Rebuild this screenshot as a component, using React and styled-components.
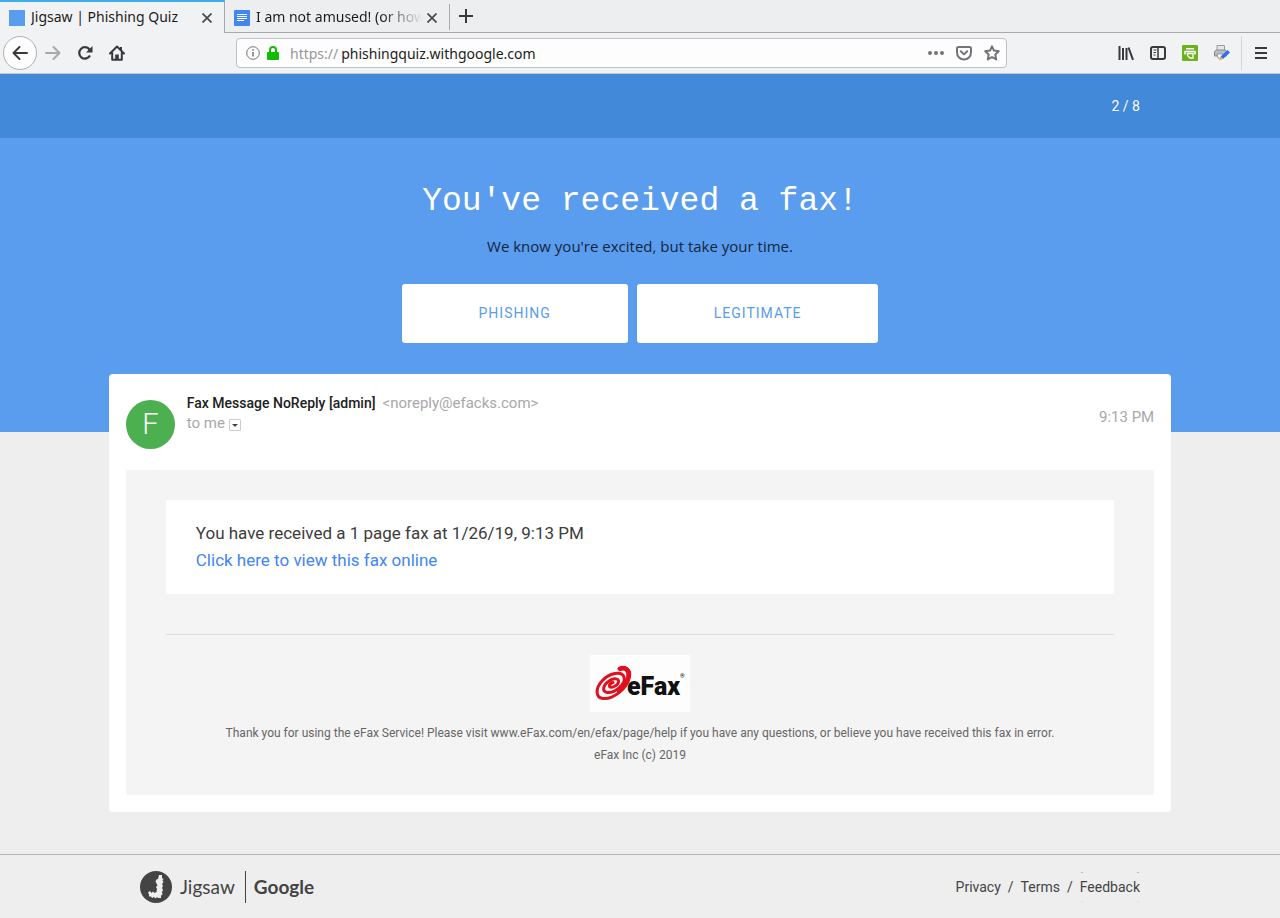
import React from 'react'
import styled, { createGlobalStyle } from 'styled-components'

const App = () => (
  <>
    <GlobalStyle />
    <Browser />
    <TopBar>
      <Container $end>
        <Counter>2 / 8</Counter>
      </Container>
    </TopBar>
    <Hero>
      <Title>You've received a fax!</Title>
      <Subtitle>We know you're excited, but take your time.</Subtitle>
      <Answers>
        <AnswerBtn type='button'>PHISHING</AnswerBtn>
        <AnswerBtn type='button'>LEGITIMATE</AnswerBtn>
      </Answers>
    </Hero>
    <Mail />
    <Footer />
  </>
)

const Browser = () => (
  <Chrome>
    <TabBar>
      <Tab $active>
        <TabButton type='button'>
          <Favicon />
          <TabLabel>Jigsaw | Phishing Quiz</TabLabel>
        </TabButton>
        <CloseButton />
      </Tab>
      <Tab>
        <TabButton type='button'>
          <DocsIcon />
          <TabLabel $fade>I am not amused! (or how</TabLabel>
        </TabButton>
        <CloseButton />
      </Tab>
      <NewTab type='button' aria-label='New tab'>
        <svg width='16' height='16' viewBox='0 0 16 16'>
          <path d='M8 1v14M1 8h14' stroke='#38383d' strokeWidth='2' />
        </svg>
      </NewTab>
    </TabBar>
    <NavBar>
      <NavGroup>
        <BackBtn type='button' aria-label='Back'>
          <Stroke d='M15 8H1.5M7.5 2L1.5 8l6 6' />
        </BackBtn>
        <ToolBtn type='button' aria-label='Forward'>
          <Stroke color='#a9a9ad' d='M1 8h13.500M8.500 2l6 6-6 6' />
        </ToolBtn>
        <ToolBtn type='button' aria-label='Reload'>
          <svg width='16' height='16' viewBox='0 0 16 16'>
            <path
              d='M13 10.500A5.700 5.700 0 1 1 12.500 4.500'
              fill='none'
              stroke='#38383d'
              strokeWidth='2.200'
            />
            <path d='M15.500 1v6.500H9z' fill='#38383d' />
          </svg>
        </ToolBtn>
        <ToolBtn type='button' aria-label='Home'>
          <svg width='16' height='16' viewBox='0 0 16 16'>
            <path
              d='M1 8.500L8 1.500l7 7M3.200 8v6.800h9.600V8'
              fill='none'
              stroke='#38383d'
              strokeWidth='2'
              strokeLinecap='round'
              strokeLinejoin='round'
            />
            <path d='M6.200 15V9.500h3.600V15z' fill='#38383d' />
            <path d='M11 2h2v4l-2-2z' fill='#38383d' />
          </svg>
        </ToolBtn>
      </NavGroup>
      <UrlBox>
        <svg width='14' height='14' viewBox='0 0 14 14'>
          <circle cx='7' cy='7' r='6.300' fill='none' stroke='#737378' />
          <path d='M7 6v4.500M7 3.200v1.600' stroke='#737378' strokeWidth='1.500' />
        </svg>
        <svg width='12' height='14' viewBox='0 0 12 14'>
          <path d='M3 7V4a3 3 0 0 1 6 0v3' fill='none' stroke='#12bc00' strokeWidth='2' />
          <rect y='6' width='12' height='8' rx='1' fill='#12bc00' />
        </svg>
        <UrlField>
          <label htmlFor='url'>https://</label>
          <input id='url' type='text' defaultValue='phishingquiz.withgoogle.com' />
        </UrlField>
        <UrlBtn type='button' aria-label='Page actions'>
          <svg width='16' height='16' viewBox='0 0 16 16' fill='#737378'>
            <circle cx='2' cy='8' r='2' />
            <circle cx='8' cy='8' r='2' />
            <circle cx='14' cy='8' r='2' />
          </svg>
        </UrlBtn>
        <UrlBtn type='button' aria-label='Save to Pocket'>
          <Stroke
            color='#737378'
            d='M2.500 2h11A1.500 1.500 0 0 1 15 3.500V7.500a7 7 0 0 1-14 0V3.500A1.500 1.500 0 0 1 2.500 2zM4.800 6.300L8 9.400l3.200-3.100'
          />
        </UrlBtn>
        <UrlBtn type='button' aria-label='Bookmark this page'>
          <Stroke
            color='#737378'
            d='M8 1.300l2 4.300 4.800.600-3.500 3.300.900 4.900L8 12l-4.200 2.400.900-4.900L1.200 6.200 6 5.600z'
          />
        </UrlBtn>
      </UrlBox>
      <NavGroup>
        <ToolBtn type='button' aria-label='Library'>
          <svg width='16' height='16' viewBox='0 0 16 16'>
            <path
              d='M1.500 1v14M5 3v12M8.500 3v12M10.500 2.500L15 14.800'
              fill='none'
              stroke='#38383d'
              strokeWidth='2'
            />
          </svg>
        </ToolBtn>
        <ToolBtn type='button' aria-label='Sidebars'>
          <svg width='16' height='16' viewBox='0 0 16 16' fill='none' stroke='#38383d'>
            <rect x='1' y='2' width='14' height='12' rx='2' strokeWidth='2' />
            <path d='M8 2v12' strokeWidth='1.500' />
            <path d='M3.500 5h3M3.500 7.500h2.500M3.500 10h2' />
          </svg>
        </ToolBtn>
        <ToolBtn type='button' aria-label='Print friendly'>
          <svg width='16' height='16' viewBox='0 0 16 16'>
            <rect width='16' height='16' rx='1' fill='#6db21d' />
            <path d='M4 3h8v1.500H4z' fill='#fff' />
            <path d='M3 9.500V6.500h10v3' fill='none' stroke='#fff' strokeWidth='1.500' />
            <path
              d='M5.500 8.500h5.500v4.500H8L5.500 10.500z'
              fill='#6db21d'
              stroke='#fff'
              strokeWidth='1.300'
            />
          </svg>
        </ToolBtn>
        <ToolBtn type='button' aria-label='Print edit'>
          <svg width='16' height='16' viewBox='0 0 16 16'>
            <path d='M3 .500h7.500V6H3z' fill='#e4e6e9' stroke='#9a9da2' />
            <path d='M.500 6.500l2-1.500h9l1 1.500V11H.500z' fill='#b9bcc1' stroke='#85888d' />
            <path d='M3 9h6v4H4z' fill='#fff' stroke='#999' />
            <path d='M13.500 5l2.500 2.500-7 6.500-2.500-2.500z' fill='#2f6ff0' />
            <path d='M6.500 11.500L9 14l-4 1.500z' fill='#e5ad3b' />
          </svg>
        </ToolBtn>
        <Divider />
        <ToolBtn type='button' aria-label='Open menu'>
          <svg width='16' height='16' viewBox='0 0 16 16'>
            <path d='M2 3h12M2 8h12M2 13h12' stroke='#38383d' strokeWidth='2' />
          </svg>
        </ToolBtn>
      </NavGroup>
    </NavBar>
  </Chrome>
)

const Stroke = ({ d, color = '#38383d' }) => (
  <svg
    width='16'
    height='16'
    viewBox='0 0 16 16'
    fill='none'
    stroke={color}
    strokeWidth='2'
    strokeLinecap='round'
    strokeLinejoin='round'
  >
    <path d={d} />
  </svg>
)

const CloseButton = () => (
  <CloseBtn type='button' aria-label='Close tab'>
    <svg width='10' height='10' viewBox='0 0 10 10'>
      <path d='M.500.500l9 9M9.500.500l-9 9' stroke='#48484d' strokeWidth='1.700' />
    </svg>
  </CloseBtn>
)

const DocsIcon = () => (
  <svg width='16' height='16' viewBox='0 0 16 16'>
    <rect width='16' height='16' rx='1' fill='#4285f4' />
    <path d='M3 4.500h10M3 6.500h10M3 8.500h10M3 10.500h7' stroke='#fff' />
  </svg>
)

const Mail = () => (
  <Card>
    <MailHeader>
      <Avatar>F</Avatar>
      <Sender>
        <From>
          <strong>Fax Message NoReply [admin]</strong>
          <span>&lt;noreply@efacks.com&gt;</span>
        </From>
        <Recipient>
          to me
          <Details type='button' aria-label='Show details'>
            <svg width='6' height='3' viewBox='0 0 6 3'>
              <path d='M0 0h6L3 3z' fill='#444' />
            </svg>
          </Details>
        </Recipient>
      </Sender>
      <Time>9:13 PM</Time>
    </MailHeader>
    <MailBody>
      <Message>
        <p>You have received a 1 page fax at 1/26/19, 9:13 PM</p>
        <a href='#fax'>Click here to view this fax online</a>
      </Message>
      <Signature>
        <EfaxLogo />
        <p>
          Thank you for using the eFax Service! Please visit
          www.eFax.com/en/efax/page/help if you have any questions, or believe
          you have received this fax in error.
        </p>
        <p>eFax Inc (c) 2019</p>
      </Signature>
    </MailBody>
  </Card>
)

const EfaxLogo = () => (
  <svg width='100' height='57' viewBox='0 0 100 57'>
    <rect width='100' height='57' fill='#fdfdfd' />
    <g fill='none' stroke='#e01020' strokeLinecap='round'>
      <path
        d='M29 13.500C35 10.500 41 14 39.500 22C37 34 23 44.500 13 43.500C5 42.500 5.500 33 12 26C19 18 32 15.500 34 22C36 29 25 38 17.500 37.500C11 36.500 13.500 29.500 19 26C24 22.500 29.500 23.500 28.500 27C27.500 31 21 33.500 19.500 31.500C18.500 30 21 28 23 27.500'
        strokeWidth='3'
      />
      <path d='M30 14C35 12 39.500 15 38.500 21.500C37 27 34 32 29 36' strokeWidth='4.500' />
    </g>
    <LogoText x='37' y='40' $size='25px'>
      eFax
    </LogoText>
    <LogoText x='90' y='23' $size='6px'>
      ®
    </LogoText>
  </svg>
)

const Footer = () => (
  <FooterBar>
    <Container>
      <Brands>
        <svg width='32' height='32' viewBox='0 0 32 32'>
          <circle cx='16' cy='16' r='16' fill='#444' />
          <path
            d='M19 4h3v3l1.500 1-1 1.500 1 1.500-1.500 2 1 2-1 2 1 2-1 2 .5 2.500-1.500 1v2.500h-3l-1-1-1.500 1.500-1.500-1.500-2 1-1-1.500h-2v-2l-1-2 2-1.500 1.500 2 1.500-1.500 1.500 1.500 2-1 .5-3-1-2 1.500-1.500-1-2-1-2 1-2 1.500-.5z'
            fill='#eee'
          />
        </svg>
        <Wordmark>Jigsaw</Wordmark>
        <BrandRule />
        <Wordmark $bold>Google</Wordmark>
      </Brands>
      <Links>
        <a href='#privacy'>Privacy</a>
        <span>/</span>
        <a href='#terms'>Terms</a>
        <span>/</span>
        <Feedback href='#feedback'>Feedback</Feedback>
      </Links>
    </Container>
  </FooterBar>
)

const GlobalStyle = createGlobalStyle`
  * {
    box-sizing: border-box;
  }
  body {
    margin: 0;
    background: #eee;
    font-family: Roboto, sans-serif;
  }
  p {
    margin: 0;
  }
  button {
    padding: 0;
    border: none;
    background: none;
    font: inherit;
    color: inherit;
    cursor: pointer;
  }
  a {
    color: inherit;
    text-decoration: none;
  }
  svg {
    display: block;
    flex-shrink: 0;
  }
`

const Chrome = styled.div`
  font-family: 'Noto Sans', sans-serif;
  font-size: 14px;
  color: #1c1c20;
  background: #f1f2f4;
`

const TabBar = styled.div`
  display: flex;
  height: 33px;
  background: linear-gradient(#a9a9ab, #a9a9ab) bottom / 100% 1px no-repeat #edeef0;
`

const Tab = styled.div`
  display: flex;
  align-items: center;
  width: 225px;
  padding: 0 12px 0 9px;
  border-top: 2px solid ${props => (props.$active ? '#3daee9' : 'transparent')};
  border-right: 1px solid #a9a9ab;
  background: ${props => (props.$active ? '#f1f2f4' : 'transparent')};
  ${props =>
    !props.$active &&
    `
    border-image: linear-gradient(transparent 5px, #a9a9ab 5px, #a9a9ab 29px, transparent 29px) 1;
    border-top-width: 0;
    padding-top: 2px;
  `}
`

const TabButton = styled.button`
  display: flex;
  flex: 1;
  align-items: center;
  gap: 6px;
  min-width: 0;
`

const TabLabel = styled.span`
  flex: 1;
  padding-bottom: 2px;
  overflow: hidden;
  white-space: nowrap;
  text-align: left;
  ${props =>
    props.$fade && 'mask-image: linear-gradient(90deg, #000 75%, transparent);'}
`

const Favicon = styled.span`
  width: 16px;
  height: 16px;
  background: #5a9ced;
`

const CloseBtn = styled.button`
  margin-left: 4px;
`

const NewTab = styled.button`
  padding: 0 8px 2px;
`

const NavBar = styled.div`
  display: flex;
  align-items: center;
  justify-content: space-between;
  height: 41px;
  padding: 0 3px;
  border-bottom: 1px solid #c4c9d0;
`

const NavGroup = styled.div`
  display: flex;
  align-items: center;
`

const ToolBtn = styled.button`
  padding: 8px;
`

const BackBtn = styled.button`
  padding: 8px;
  border: 1px solid #b1b1b3;
  border-radius: 50%;
  background: #fdfdfd;
`

const UrlBox = styled.div`
  display: flex;
  flex: 0 1 771px;
  align-items: center;
  gap: 7px;
  height: 30px;
  padding: 0 6px 0 9px;
  border: 1px solid #c0c0c3;
  border-radius: 4px;
  background: #fdfdfd;
`

const UrlField = styled.div`
  display: flex;
  flex: 1;
  align-items: center;
  gap: 3px;
  margin-left: 4px;
  label {
    color: #96969a;
  }
  input {
    flex: 1;
    padding: 0;
    border: none;
    outline: none;
    background: none;
    font: inherit;
    color: #1c1c20;
  }
`

const UrlBtn = styled.button`
  margin-left: 5px;
`

const Divider = styled.span`
  width: 1px;
  height: 34px;
  margin: 0 3px;
  background: #d5d6d9;
`

const TopBar = styled.header`
  display: flex;
  align-items: center;
  height: 64px;
  background: #4289da;
`

const Container = styled.div`
  display: flex;
  align-items: center;
  justify-content: ${props => (props.$end ? 'flex-end' : 'space-between')};
  width: 100%;
  max-width: 1000px;
  margin: 0 auto;
`

const Counter = styled.span`
  font-size: 14px;
  color: #fff;
`

const Hero = styled.section`
  padding: 44px 20px 89px;
  background: #5a9ced;
  text-align: center;
`

const Title = styled.h1`
  margin: 0;
  font-family: 'Liberation Mono', monospace;
  font-size: 33px;
  font-weight: 400;
  line-height: 40px;
  color: #fff;
`

const Subtitle = styled.p`
  margin: 14px 0 28px;
  font-family: 'Open Sans', sans-serif;
  font-size: 15px;
  line-height: 20px;
  color: #12263f;
`

const Answers = styled.div`
  display: flex;
  justify-content: center;
  gap: 9px;
`

const AnswerBtn = styled.button`
  height: 59px;
  padding: 0 77px 2px;
  border-radius: 3px;
  background: #fff;
  font-size: 14px;
  letter-spacing: 1px;
  color: #5a9ced;
`

const Card = styled.main`
  width: 83%;
  margin: -58px auto 42px;
  padding: 17px;
  border-radius: 4px;
  background: #fff;
`

const MailHeader = styled.div`
  display: flex;
  align-items: flex-start;
  min-height: 79px;
  font-size: 15px;
  line-height: 20px;
  color: #a8a8a8;
`

const Avatar = styled.div`
  width: 49px;
  height: 49px;
  margin: 9px 12px 0 0;
  border-radius: 50%;
  background: #4caf50;
  font-size: 29px;
  font-weight: 300;
  line-height: 49px;
  text-align: center;
  color: #fff;
`

const Sender = styled.div`
  flex: 1;
  padding-top: 2px;
`

const From = styled.div`
  display: flex;
  flex-wrap: wrap;
  gap: 0 7px;
  strong {
    font-size: 14px;
    font-weight: 500;
    color: #212121;
  }
`

const Recipient = styled.div`
  display: flex;
  align-items: center;
  gap: 4px;
`

const Details = styled.button`
  display: flex;
  align-items: center;
  justify-content: center;
  width: 12px;
  height: 12px;
  margin-top: 4px;
  border: 1px solid #ccc;
  border-radius: 1px;
`

const Time = styled.span`
  padding-top: 16px;
`

const MailBody = styled.div`
  padding: 30px 40px 29px;
  background: #f4f4f4;
`

const Message = styled.div`
  padding: 20px 30px;
  background: #fff;
  font-size: 17px;
  line-height: 27px;
  color: #3c3c3c;
  a {
    color: #4285f4;
  }
`

const Signature = styled.div`
  display: flex;
  flex-direction: column;
  align-items: center;
  margin-top: 40px;
  padding-top: 20px;
  border-top: 1px solid #dcdcdc;
  font-size: 12px;
  line-height: 22px;
  text-align: center;
  color: #666;
  svg {
    margin-bottom: 10px;
  }
`

const LogoText = styled.text`
  font-family: Roboto, sans-serif;
  font-size: ${props => props.$size};
  font-weight: 900;
  fill: #111;
`

const FooterBar = styled.footer`
  padding: 16px 0 15px;
  border-top: 1px solid #b3b3b3;
  color: #444;
`

const Brands = styled.div`
  display: flex;
  align-items: center;
`

const Wordmark = styled.span`
  margin-left: 8px;
  font-family: Lato, sans-serif;
  font-size: 19px;
  font-weight: ${props => (props.$bold ? 700 : 400)};
  line-height: 32px;
`

const BrandRule = styled.span`
  width: 1px;
  height: 32px;
  margin-left: 10px;
  background: #444;
`

const Links = styled.nav`
  display: flex;
  gap: 7px;
  font-size: 14px;
  line-height: 30px;
`

/* only the corners of the focus frame are visible */
const Feedback = styled.a`
  background:
    linear-gradient(#bbb, #bbb) 1px 0 / 2px 1px no-repeat,
    linear-gradient(#bbb, #bbb) calc(100% - 1px) 0 / 2px 1px no-repeat,
    linear-gradient(#ddd, #ddd) 1px 100% / 2px 1px no-repeat,
    linear-gradient(#ddd, #ddd) calc(100% - 1px) 100% / 2px 1px no-repeat;
`

export default App
